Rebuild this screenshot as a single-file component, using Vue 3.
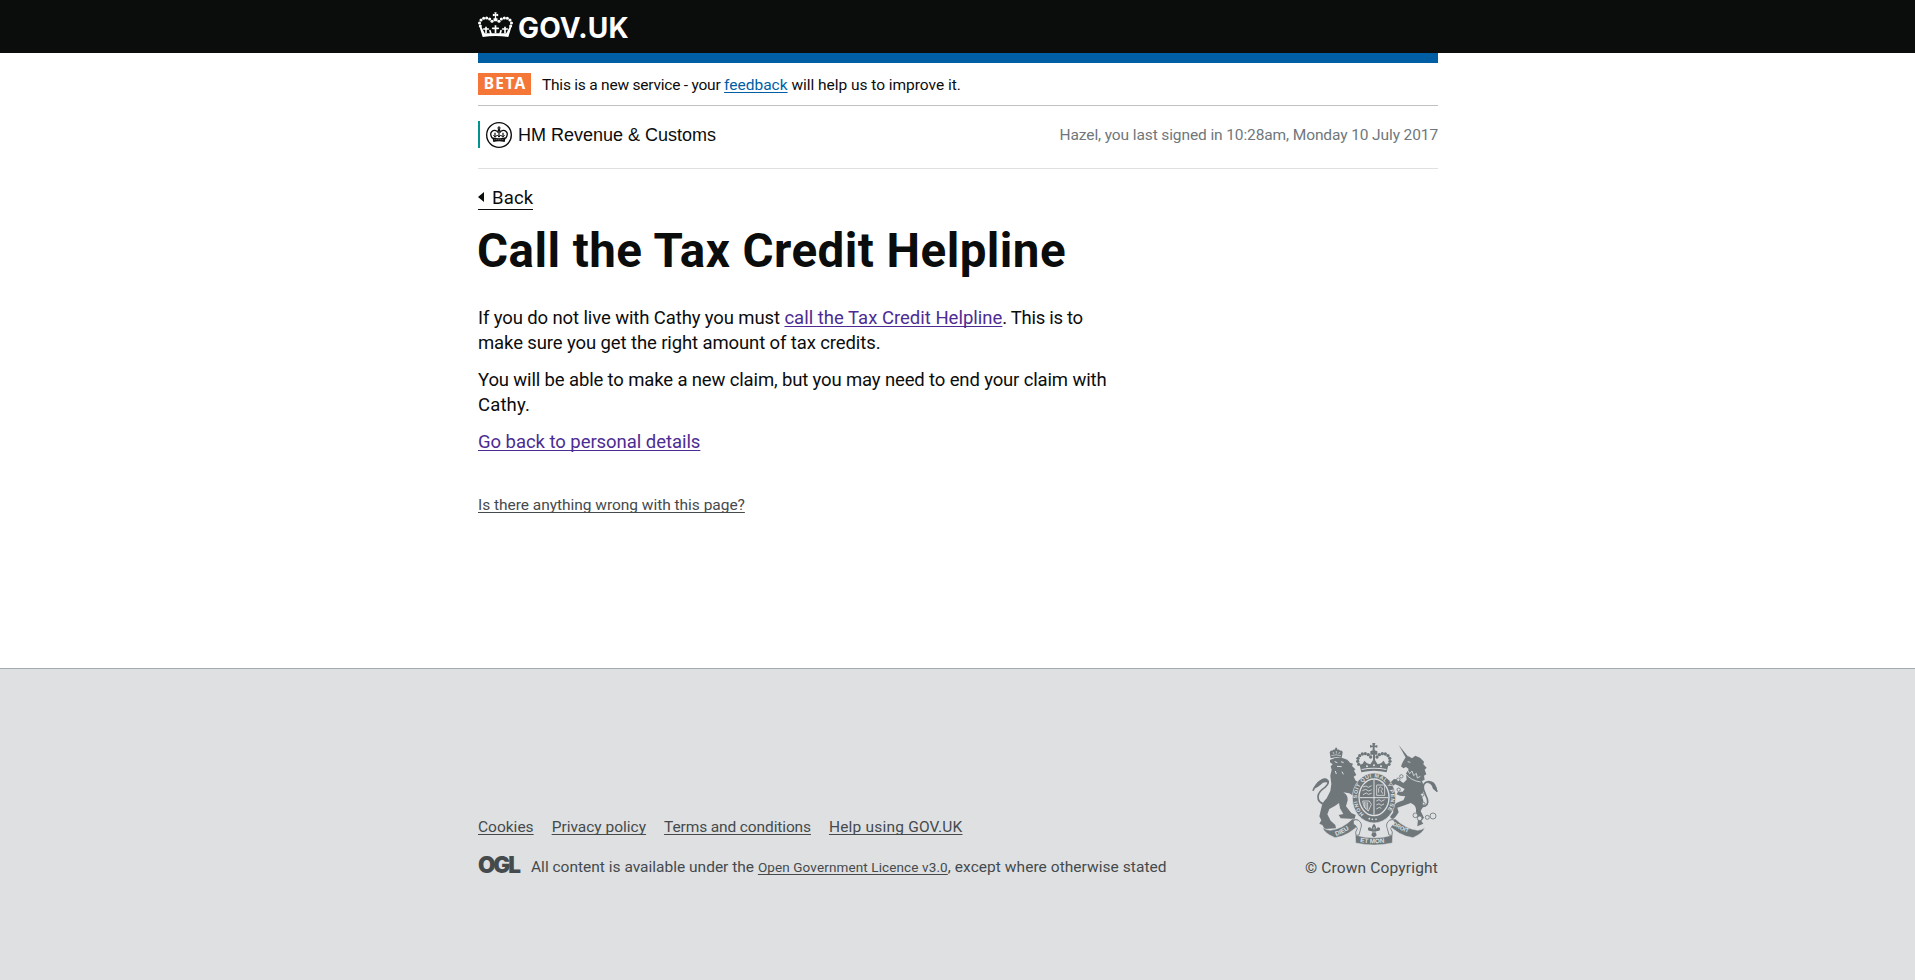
<script setup>
const links = [
  { label: 'Cookies', cls: 'l-cookies' },
  { label: 'Privacy policy', cls: 'l-privacy' },
  { label: 'Terms and conditions', cls: 'l-terms' },
  { label: 'Help using GOV.UK', cls: 'l-help' },
]
const beads = [[7, 42], [4.6, 33], [9, 24], [17, 19], [26, 18], [35, 21], [42, 28]]
const crestBeads = [[206, 106], [203, 97], [204, 88], [209, 80], [217, 75], [226, 74], [235, 77], [242, 84]]
const chain = [[334, 142, 5], [325, 152, 5], [326, 182, 5], [397, 197, 5], [401, 224, 4], [376, 259, 7], [389, 268, 7], [412, 265, 6], [429, 261, 9]]
</script>

<template>
  <div class="page">
    <header class="top">
      <div class="wrap brand">
        <svg class="crown" viewBox="0 0 105 78" fill="#fff">
          <g v-for="b in beads" :key="b[0]">
            <circle :cx="b[0]" :cy="b[1]" r="4.6" />
            <circle :cx="105 - b[0]" :cy="b[1]" r="4.6" />
          </g>
          <path d="M49 1h7l-1.500 6 6-1.500v7l-6-1.500v8h4v9h-12v-9h4v-8l-6 1.500v-7l6 1.500z" />
          <path d="M5 46 10 44 20 64H85L95 44 100 46 91 75Q52 69 14 75Z" />
          <path d="M24 64V44M52.500 64V40M81 64V44" stroke="#fff" stroke-width="5" />
          <path d="M17 51h14M44 49h17M74 51h14M39 66l-3-10M66 66l3-10" stroke="#fff" stroke-width="5" stroke-linecap="round" />
        </svg>
        <span class="gov">GOV.UK</span>
      </div>
    </header>

    <main class="wrap main">
      <div class="bluebar"></div>
      <div class="phase">
        <strong class="beta"><span>BETA</span></strong>
        <span class="phase-text"><span class="t1">This is a new service - your </span><a class="link">feedback</a><span class="t2"> will help us to improve it.</span></span>
      </div>
      <div class="org">
        <div class="org-name">
          <svg class="seal" viewBox="0 0 78 78">
            <circle cx="39" cy="39" r="37" fill="#fff" stroke="#0b0c0c" stroke-width="4" />
            <g fill="none" stroke="#0b0c0c" stroke-width="4">
              <path d="M20 50Q10 36 17 29 27 20 37 32" />
              <path d="M58 50Q68 36 61 29 51 20 41 32" />
              <path d="M39 13V46M34 18h10M27 32v14M51 32v14" stroke-width="3.500" />
              <path d="M22 40l6 5 6-6 5 6 5-6 6 6 6-5" stroke-width="3" />
            </g>
            <circle cx="39" cy="25" r="4" fill="#0b0c0c" />
            <path d="M19 46q20 6 40 0l-3 14q-17-4-34 0z" fill="#0b0c0c" />
            <path d="M25 53h28" stroke="#fff" stroke-width="1.500" stroke-dasharray="3 3" />
          </svg>
          <span>HM Revenue &amp; Customs</span>
        </div>
        <div class="signed">Hazel, you last signed in 10:28am, Monday 10 July 2017</div>
      </div>

      <a class="back"><i class="arrow"></i><span>Back</span></a>
      <h1>Call the Tax Credit Helpline</h1>
      <div class="copy">
        <p><span class="s1">If you do not live with Cathy you must </span><a class="visited">call the Tax Credit Helpline</a><span class="s2">. This is to</span><br><span class="s1">make sure you get the right amount of tax credits.</span></p>
        <p class="s3">You will be able to make a new claim, but you may need to end your claim with<br><span class="s6">Cathy.</span></p>
        <p><a class="visited s4">Go back to personal details</a></p>
      </div>
      <a class="report">Is there anything wrong with this page?</a>
    </main>

    <footer class="foot">
      <div class="wrap foot-row">
        <div class="meta">
          <nav class="links"><a v-for="l in links" :key="l.label" :class="l.cls">{{ l.label }}</a></nav>
          <div class="licence">
            <span class="ogl">OGL</span>
            <span class="lic-text"><span>All content is available under the </span><a class="ogl-link">Open Government Licence v3.0</a><span class="s5">, except where otherwise stated</span></span>
          </div>
        </div>
        <div class="copyright">
          <svg class="arms" viewBox="66 39 378 312">
            <defs>
              <path id="garter" d="M224 257A51 61 0 1 1 280 257" />
              <path id="motto-l" d="M138 321Q167 312 195 286" />
              <path id="motto-m" d="M210 339Q252 347 300 338" />
              <path id="motto-r" d="M307 287Q336 310 375 315" />
            </defs>
            <!-- lion -->
            <g fill="#6f777b">
              <path d="M122 88 119 70q3-8 8-5 3-5 8-3l1-6h5l1 6q5-2 8 3 7-2 8 5l-3 17q-17-5-33 1z" />
              <path d="M120 93 135 87 157 87 172 92 180 101 189 104 186 111 196 121 192 125 199 138 191 143 197 155 205 158 202 166 208 177 200 192 190 200 178 193 160 190Q174 198 173 214L168 232 184 252 197 258 194 270 152 268 146 258 160 255 150 238 147 222Q135 232 118 240L112 256 122 275 136 288 138 298 104 300 97 288 88 284 94 274 88 262 94 236Q96 222 110 208L121 186 124 165 121 140 125 122 122 112 128 106 120 100Z" />
              <path d="M73 179Q76 155 103 149q16 1 14 14-14-8-25 4-10 9-19 12z" />
            </g>
            <path d="M106 226Q83 223 84 202 85 188 105 175 122 160 109 151 97 148 83 164 73 174 69 185" fill="none" stroke="#6f777b" stroke-width="5" />
            <g fill="none" stroke="#dee0e2" stroke-width="2"><path d="M124 80q14-5 29 0M129 69l3 6M149 69l-3 6M139 66v8" /><path d="M134 98l8 3M153 98l8 3M141 112l14 1M156 128l4 8M136 126l3 9" stroke-width="3" /></g>
            <!-- unicorn -->
            <g fill="#6f777b">
              <path d="M326 48 357 86l-7 5z" />
              <path d="M356 82 366 88 376 80 390 86 402 98 400 106 410 116 404 122 409 136 402 140 404 152 396 156Q402 168 402 184L396 202Q402 216 400 232L392 246 402 266 394 276 400 284 382 292 384 270 378 248Q380 228 362 222L346 228 322 236 326 250 318 262 308 272 300 264 310 250 308 232Q318 220 340 214L346 202 330 200 320 196 324 188 338 188 344 180 326 170 316 166 306 172 302 160 312 150 326 152 340 162 350 152 348 134 356 120 348 114 340 118 333 112 338 100 346 86Z" />
              <path d="M413 162q12-10 22 3 6 10 7 23-14-4-16-17-5-9-13-9z" />
            </g>
            <path d="M396 233Q418 231 412 210 406 196 401 182 396 161 415 158 430 157 441 188" fill="none" stroke="#6f777b" stroke-width="5" />
            <g fill="none" stroke="#dee0e2" stroke-width="2.500"><path d="M352 122l7 12 7-8 5 14 8-7 3 14 9-5M346 133q16 22 46 26M353 98l8 2" /></g>
            <!-- crown -->
            <g fill="#6f777b">
              <path d="M247 42h9l-2 8 8-2v8l-8-2v10l8 3v10h-21V67l7-3V54l-8 2v-8l8 2z" />
              <path d="M209 108l9-4 5-9 8 8 10 3 8-13h6l8 13 10-3 8-8 5 9 9 4-5 22q-38-9-76 0z" />
              <g v-for="b in crestBeads" :key="b[0]">
                <circle :cx="b[0]" :cy="b[1]" r="5" /><circle :cx="503 - b[0]" :cy="b[1]" r="5" />
              </g>
              <path d="M249 76h6v20h-6z" />
            </g>
            <g fill="#dee0e2"><circle cx="231" cy="112" r="3" /><circle cx="252" cy="109" r="3" /><circle cx="273" cy="112" r="3" /><path d="M215 120q37-8 74 0v3q-37-8-74 0z" /></g>
            <!-- shield and garter -->
            <ellipse cx="252" cy="207" rx="65" ry="75" fill="#6f777b" stroke="#dee0e2" stroke-width="2" />
            <ellipse cx="252" cy="205" rx="47" ry="57" fill="#dee0e2" />
            <ellipse cx="252" cy="205" rx="43" ry="53" fill="#6f777b" />
            <text class="motto garter" textLength="270"><textPath href="#garter" startOffset="2">HONI SOIT QUI MAL Y PENSE</textPath></text>
            <path d="M252 152v106M209 206h86" stroke="#dee0e2" stroke-width="3" />
            <g fill="none" stroke="#dee0e2" stroke-width="2.500">
              <path d="M219 174l9-3 7 4 10-5M217 185l10-4 9 5 9-4M219 197l10-5 6 4 10-3" />
              <path d="M259 216l8-4 7 5 10-5M259 228l8-4 6 5 9-4M259 240l9-5 6 3" />
              <path d="M260 168h24v31h-24zM266 191q-3-14 5-18l7 7-5 5 5 9" />
              <path d="M218 216h20l6 10-9 20q-14-8-17-30M223 219v17M228 219v21M233 220v22" />
            </g>
            <g fill="#dee0e2"><circle cx="238" cy="269" r="2.500" /><circle cx="247" cy="271" r="2.500" /><circle cx="258" cy="271" r="2.500" /></g>
            <!-- chain -->
            <g fill="#dee0e2" stroke="#6f777b" stroke-width="2.500"><circle v-for="(c, i) in chain" :key="i" :cx="c[0]" :cy="c[1]" :r="c[2]" /></g>
            <!-- fleur-de-lis -->
            <path d="M252 284q9 9 5 17 8-10 13-3 2 9-9 8l-4 3 3 10-8 7-8-7 3-10-4-3q-11 1-9-8 5-7 13 3-4-8 5-17z" fill="#6f777b" />
            <path d="M242 309h20M252 294v8" stroke="#dee0e2" stroke-width="2" />
            <!-- motto ribbons -->
            <g fill="#6f777b" stroke="#dee0e2" stroke-width="1.500">
              <path d="M98 296Q102 312 135 326 175 322 212 282L203 271 187 270Q157 300 121 304 108 303 98 296Z" />
              <path d="M404 296Q400 312 369 326 327 322 291 282L300 271 316 270Q347 300 383 304 396 303 404 296Z" />
              <path d="M196 318Q252 336 308 318L307 342Q252 354 197 342Z" />
            </g>
            <g fill="#dee0e2" stroke="#6f777b" stroke-width="2.500">
              <path d="M190 275q8-6 15-1 14 9 7 25l-5 19-9 1q-4-10 4-20-3-10-12-14z" />
              <path d="M314 275q-8-6-15-1-14 9-7 25l5 19 9 1q4-10-4-20 3-10 12-14z" />
            </g>
            <text class="motto"><textPath href="#motto-l">DIEU</textPath></text>
            <text class="motto"><textPath href="#motto-m">ET MON</textPath></text>
            <text class="motto droit"><textPath href="#motto-r">DROIT</textPath></text>
          </svg>
          <a>© Crown Copyright</a>
        </div>
      </div>
    </footer>
  </div>
</template>

<style>
body { margin: 0; background: #fff; }
</style>

<style scoped>
.page { min-height: 980px; display: flex; flex-direction: column; font-family: Roboto, "Liberation Sans", sans-serif; color: #0b0c0c; font-size: 15.5px; line-height: 20px; white-space: pre; }
.wrap { width: 960px; margin-left: 478px; }
.top { height: 53px; background: #0b0c0c; }
.brand { display: flex; align-items: flex-start; }
.crown { width: 35px; height: 26px; margin-top: 12px; display: block; }
.gov { font: 700 28px/34px Inter, sans-serif; color: #fff; margin: 11px 0 0 5px; letter-spacing: 0.2px; }
.main { height: 615px; display: flex; flex-direction: column; align-items: stretch; }
.bluebar { height: 10px; background: #005ea5; }
.phase { height: 42px; border-bottom: 1px solid #bfc1c3; display: flex; align-items: flex-start; }
.beta { width: 53px; height: 22px; margin-top: 10px; background: #f47738; color: #fff; font: 700 15.5px/21px "Noto Sans", sans-serif; letter-spacing: 1.3px; text-align: center; }
.beta span { margin-right: -1.3px; }
.phase-text { margin: 12px 0 0 11px; }
.t1 { letter-spacing: -0.22px; }
.t2 { letter-spacing: -0.03px; }
a { text-decoration: underline; text-decoration-thickness: 1px; text-underline-offset: 2px; text-decoration-skip-ink: none; }
.link { color: #005ea5; }
.visited { color: #4c2c92; }
.org { height: 62px; border-bottom: 1px solid #dee0e2; display: flex; justify-content: space-between; align-items: flex-start; }
.org-name { display: flex; align-items: center; margin-top: 15px; height: 27px; border-left: 2px solid #009390; padding-left: 6px; font: 18px/27px "Liberation Sans", sans-serif; }
.org-name span { margin: 2px 0 0 6px; }
.seal { width: 26px; height: 26px; }
.signed { margin-top: 19px; color: #6f777b; letter-spacing: -0.11px; }
.back { align-self: flex-start; display: flex; align-items: center; margin-top: 16px; height: 24px; border-bottom: 1px solid #0b0c0c; text-decoration: none; font-size: 18.5px; line-height: 24px; letter-spacing: 0.2px; }
.back span { margin-top: 2px; }
.arrow { width: 0; height: 0; border: 5px solid transparent; border-right: 6px solid #0b0c0c; border-left: 0; margin-right: 8px; }
h1 { margin: 16px 0 0 -1px; font-size: 47.5px; line-height: 50px; font-weight: 700; letter-spacing: 0.45px; }
.copy { margin-top: 30px; font-size: 18.5px; line-height: 25px; }
.copy p { margin: 0 0 12px; }
.s1 { letter-spacing: -0.11px; }
.s2 { letter-spacing: -0.3px; }
.s3 { letter-spacing: -0.14px; }
.s4 { letter-spacing: -0.05px; }
.s6 { letter-spacing: 0.15px; }
.report { align-self: flex-start; margin-top: 28px; color: #454a4c; letter-spacing: -0.03px; }
.foot { flex: 1; background: #dee0e2; border-top: 1px solid #a1acb2; color: #454a4c; box-sizing: border-box; }
.foot-row { display: flex; justify-content: space-between; padding-top: 73px; }
.meta { padding-top: 75px; }
.links { display: flex; gap: 18px; }
.l-terms { letter-spacing: -0.12px; }
.l-help { letter-spacing: 0.2px; }
.licence { display: flex; align-items: flex-start; margin-top: 20px; }
.ogl { width: 53px; margin-top: -2px; font: 900 22.5px/20px Inter, sans-serif; letter-spacing: -2.1px; }
.lic-text { line-height: 20px; }
.ogl-link { font-size: 13.5px; letter-spacing: 0.12px; }
.s5 { letter-spacing: 0.05px; }
.copyright { display: flex; flex-direction: column; align-items: flex-end; }
.copyright a { text-decoration: none; letter-spacing: 0.16px; margin-top: 12px; }
.arms { width: 126px; height: 104px; display: block; }
.motto { font: 700 19px "Liberation Sans", sans-serif; fill: #dee0e2; }
.garter { font-size: 16px; }
.droit { font-size: 17px; }
</style>
